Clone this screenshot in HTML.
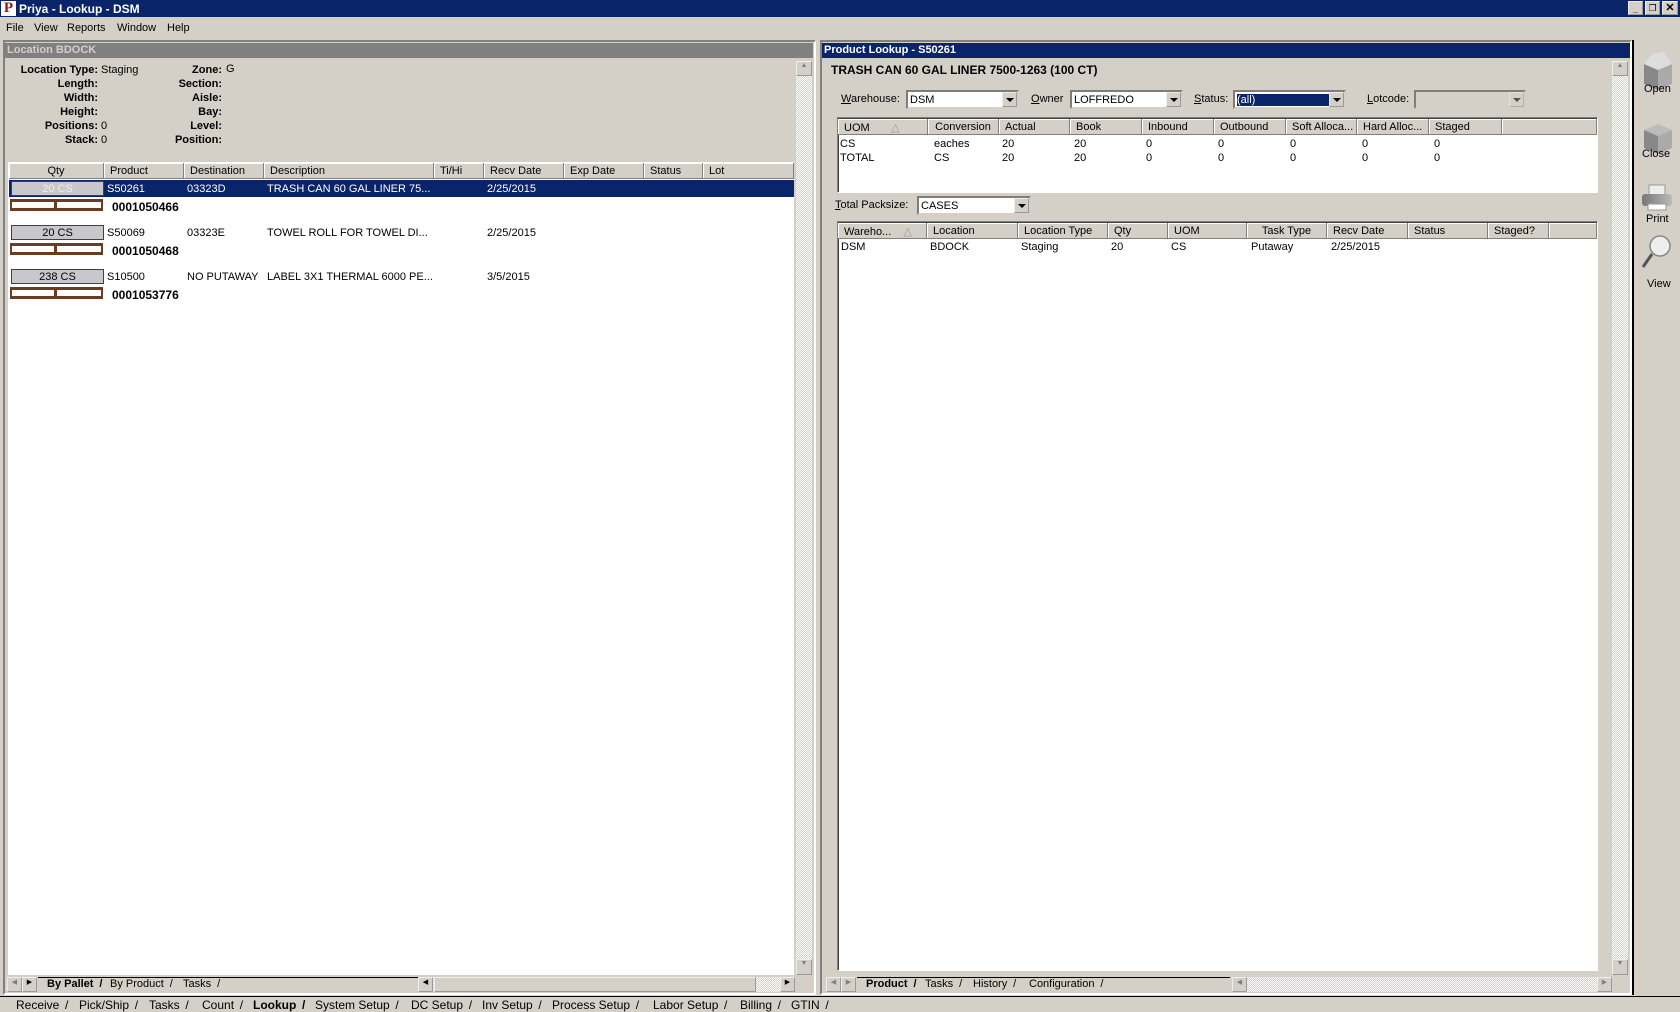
<!DOCTYPE html>
<html><head><meta charset="utf-8"><style>
*{box-sizing:border-box;margin:0;padding:0}
body{width:1680px;height:1012px;background:#d4d0c8;font-family:"Liberation Sans",Tahoma,sans-serif;font-size:11px;color:#000;position:relative;overflow:hidden}
.a{position:absolute;white-space:nowrap}
.b{font-weight:bold}
.sunk{border:1px solid;border-color:#808080 #fff #fff #808080;box-shadow:inset 1px 1px 0 #404040}
.hd{position:absolute;height:16px;background:#d4d0c8;border-right:1px solid #808080;border-bottom:1px solid #808080;box-shadow:inset 1px 1px 0 #fff;padding:2px 6px;white-space:nowrap;overflow:hidden}
.combo{position:absolute;height:19px;background:#fff;border:2px inset #d4d0c8;padding:2px 2px;font-size:11px}
.combo i{position:absolute;right:0;top:0;width:15px;height:15px;background:#d4d0c8;border:1px outset #eee}
.combo i:after{content:"";position:absolute;left:3px;top:5px;border:4px solid transparent;border-top:4px solid #000}
.sb{position:absolute;background:repeating-conic-gradient(#fff 0 25%,#d4d0c8 0 50%) 0 0/2px 2px}
.btn{position:absolute;width:15px;height:15px;background:#d4d0c8;border:1px outset #eee}
.pal{position:absolute;width:93px;height:12px;border:3px solid #6b3d20;border-left-width:2px;border-right-width:2px;background:#fff}
.pal:before{content:"";position:absolute;left:42px;top:0;width:3px;height:6px;background:#6b3d20}
.qty{position:absolute;width:93px;height:15px;background:#c8c8cc;border:1px solid #404040;text-align:center;padding-top:1px}
.tab{position:absolute}
.tab:after{content:"/";position:absolute;right:-9px;color:#000}
</style></head><body>
<!-- title -->
<div class="a" style="left:0;top:0;width:1680px;height:17px;background:#0a246a"></div>
<div class="a" style="left:1px;top:1px;width:15px;height:15px;background:#fff;color:#8b1a1a;font:bold 15px 'Liberation Serif',serif;line-height:15px;text-align:center">P</div>
<div class="a b" style="left:19px;top:2px;color:#fff;font-size:12px">Priya - Lookup - DSM</div>
<div class="btn" style="left:1628px;top:1px;width:15px;height:14px;font-size:9px;text-align:center;font-weight:bold;line-height:14px">_</div>
<div class="btn" style="left:1645px;top:1px;width:15px;height:14px;font-size:9px;text-align:center;line-height:12px">❐</div>
<div class="btn" style="left:1662px;top:1px;width:16px;height:14px;text-align:center;font-weight:bold;line-height:12px">✕</div>
<!-- menu -->
<div class="a" style="left:6px;top:22px">File</div>
<div class="a" style="left:34px;top:22px">View</div>
<div class="a" style="left:67px;top:22px">Reports</div>
<div class="a" style="left:117px;top:22px">Window</div>
<div class="a" style="left:167px;top:22px">Help</div>

<!-- left panel -->
<div class="a" style="left:3px;top:40px;width:813px;height:955px;border:2px solid;border-color:#808080 #fff #fff #808080"></div>
<div class="a b" style="left:5px;top:43px;width:808px;height:15px;background:#808080;color:#d4d0c8;padding:1px 2px">Location BDOCK</div>
<div class="a b" style="left:0;top:63px;width:98px;text-align:right;line-height:14px">Location Type:<br>Length:<br>Width:<br>Height:<br>Positions:<br>Stack:</div>
<div class="a" style="left:101px;top:63px;line-height:14px">Staging<br><br><br><br>0<br>0</div>
<div class="a b" style="left:150px;top:63px;width:72px;text-align:right;line-height:14px">Zone:<br>Section:<br>Aisle:<br>Bay:<br>Level:<br>Position:</div>
<div class="a" style="left:226px;top:63px">G</div>
<div class="a" style="left:8px;top:162px;width:786px;height:813px;background:#fff" ></div>
<div class="hd" style="left:9px;top:163px;width:95px;text-align:center">Qty</div>
<div class="hd" style="left:104px;top:163px;width:80px">Product</div>
<div class="hd" style="left:184px;top:163px;width:80px">Destination</div>
<div class="hd" style="left:264px;top:163px;width:170px">Description</div>
<div class="hd" style="left:434px;top:163px;width:50px">Ti/Hi</div>
<div class="hd" style="left:484px;top:163px;width:80px">Recv Date</div>
<div class="hd" style="left:564px;top:163px;width:80px">Exp Date</div>
<div class="hd" style="left:644px;top:163px;width:59px">Status</div>
<div class="hd" style="left:703px;top:163px;width:91px">Lot</div>
<div class="a" style="left:9px;top:180px;width:785px;height:17px;background:#0a246a"></div>
<div class="qty" style="left:11px;top:181px;color:#eee">20 CS</div>
<div class="a" style="left:107px;top:183px;color:#fff">S50261</div><div class="a" style="left:187px;top:183px;color:#fff">03323D</div><div class="a" style="left:267px;top:183px;color:#fff">TRASH CAN 60 GAL LINER 75...</div><div class="a" style="left:487px;top:183px;color:#fff">2/25/2015</div>
<div class="pal" style="left:10px;top:199px"></div><div class="a b" style="left:112px;top:200px;font-size:12px">0001050466</div>
<div class="qty" style="left:11px;top:225px">20 CS</div>
<div class="a" style="left:107px;top:227px">S50069</div><div class="a" style="left:187px;top:227px">03323E</div><div class="a" style="left:267px;top:227px">TOWEL ROLL FOR TOWEL DI...</div><div class="a" style="left:487px;top:227px">2/25/2015</div>
<div class="pal" style="left:10px;top:243px"></div><div class="a b" style="left:112px;top:244px;font-size:12px">0001050468</div>
<div class="qty" style="left:11px;top:269px">238 CS</div>
<div class="a" style="left:107px;top:271px">S10500</div><div class="a" style="left:187px;top:271px">NO PUTAWAY</div><div class="a" style="left:267px;top:271px">LABEL 3X1 THERMAL 6000 PE...</div><div class="a" style="left:487px;top:271px">3/5/2015</div>
<div class="pal" style="left:10px;top:287px"></div><div class="a b" style="left:112px;top:288px;font-size:12px">0001053776</div>
<div class="sb" style="left:796px;top:61px;width:16px;height:914px"></div>
<div class="btn" style="left:796px;top:61px;width:16px;height:15px;font-size:7px;text-align:center;color:#808080">▲</div>
<div class="btn" style="left:796px;top:959px;width:16px;height:16px;font-size:7px;text-align:center;color:#808080">▼</div>
<div class="btn" style="left:7px;top:977px;font-size:7px;text-align:center;color:#808080">◀</div>
<div class="btn" style="left:22px;top:977px;font-size:7px;text-align:center">▶</div>
<div class="a" style="left:38px;top:977px;width:380px;height:15px;border-top:1px solid #000"></div>
<div class="tab b" style="left:47px;top:978px">By Pallet</div>
<div class="tab" style="left:110px;top:978px">By Product</div>
<div class="tab" style="left:183px;top:978px">Tasks</div>
<div class="sb" style="left:418px;top:977px;width:377px;height:15px"></div>
<div class="btn" style="left:418px;top:977px;font-size:7px;text-align:center">◀</div>
<div class="a" style="left:434px;top:977px;width:322px;height:15px;background:#d4d0c8;border:1px outset #eee"></div>
<div class="btn" style="left:780px;top:977px;font-size:7px;text-align:center">▶</div>

<!-- right panel -->
<div class="a" style="left:820px;top:40px;width:812px;height:955px;border:2px solid;border-color:#808080 #fff #fff #808080"></div>
<div class="a b" style="left:822px;top:43px;width:808px;height:15px;background:#0a246a;color:#fff;padding:1px 2px">Product Lookup - S50261</div>
<div class="a b" style="left:831px;top:63px;font-size:12px">TRASH CAN 60 GAL LINER 7500-1263 (100 CT)</div>
<div class="a" style="left:841px;top:93px"><u>W</u>arehouse:</div>
<div class="combo" style="left:906px;top:90px;width:113px">DSM<i></i></div>
<div class="a" style="left:1031px;top:93px"><u>O</u>wner</div>
<div class="combo" style="left:1070px;top:90px;width:113px">LOFFREDO<i></i></div>
<div class="a" style="left:1194px;top:93px"><u>S</u>tatus:</div>
<div class="combo" style="left:1233px;top:90px;width:113px"><span style="background:#0a246a;color:#fff;display:inline-block;width:92px;outline:1px dotted #fff">(all)</span><i></i></div>
<div class="a" style="left:1367px;top:93px"><u>L</u>otcode:</div>
<div class="combo" style="left:1414px;top:90px;width:112px;background:#d4d0c8"><i style="opacity:.6"></i></div>
<div class="a sunk" style="left:837px;top:117px;width:761px;height:76px;background:#fff"></div>
<div class="hd" style="left:838px;top:119px;width:90px">UOM &nbsp; &nbsp; &nbsp; <span style="color:#999">△</span></div>
<div class="hd" style="left:928px;top:119px;width:71px;text-align:center">Conversion</div>
<div class="hd" style="left:999px;top:119px;width:71px">Actual</div>
<div class="hd" style="left:1070px;top:119px;width:72px">Book</div>
<div class="hd" style="left:1142px;top:119px;width:72px">Inbound</div>
<div class="hd" style="left:1214px;top:119px;width:72px">Outbound</div>
<div class="hd" style="left:1286px;top:119px;width:71px">Soft Alloca...</div>
<div class="hd" style="left:1357px;top:119px;width:72px">Hard Alloc...</div>
<div class="hd" style="left:1429px;top:119px;width:73px">Staged</div>
<div class="hd" style="left:1502px;top:119px;width:95px"></div>
<div class="a" style="left:840px;top:137px;line-height:14px">CS<br>TOTAL</div>
<div class="a" style="left:934px;top:137px;line-height:14px">eaches<br>CS</div>
<div class="a" style="left:1002px;top:137px;line-height:14px">20<br>20</div>
<div class="a" style="left:1074px;top:137px;line-height:14px">20<br>20</div>
<div class="a" style="left:1146px;top:137px;line-height:14px">0<br>0</div>
<div class="a" style="left:1218px;top:137px;line-height:14px">0<br>0</div>
<div class="a" style="left:1290px;top:137px;line-height:14px">0<br>0</div>
<div class="a" style="left:1362px;top:137px;line-height:14px">0<br>0</div>
<div class="a" style="left:1434px;top:137px;line-height:14px">0<br>0</div>
<div class="a" style="left:835px;top:199px"><u>T</u>otal Packsize:</div>
<div class="combo" style="left:917px;top:196px;width:114px">CASES<i></i></div>
<div class="a sunk" style="left:837px;top:221px;width:761px;height:750px;background:#fff"></div>
<div class="hd" style="left:838px;top:223px;width:89px">Wareho... &nbsp; &nbsp;<span style="color:#999">△</span></div>
<div class="hd" style="left:927px;top:223px;width:91px">Location</div>
<div class="hd" style="left:1018px;top:223px;width:90px">Location Type</div>
<div class="hd" style="left:1108px;top:223px;width:60px">Qty</div>
<div class="hd" style="left:1168px;top:223px;width:79px">UOM</div>
<div class="hd" style="left:1247px;top:223px;width:80px;text-align:center">Task Type</div>
<div class="hd" style="left:1327px;top:223px;width:81px">Recv Date</div>
<div class="hd" style="left:1408px;top:223px;width:80px">Status</div>
<div class="hd" style="left:1488px;top:223px;width:61px">Staged?</div>
<div class="hd" style="left:1549px;top:223px;width:48px"></div>
<div class="a" style="left:841px;top:241px">DSM</div><div class="a" style="left:930px;top:241px">BDOCK</div><div class="a" style="left:1021px;top:241px">Staging</div><div class="a" style="left:1111px;top:241px">20</div><div class="a" style="left:1171px;top:241px">CS</div><div class="a" style="left:1251px;top:241px">Putaway</div><div class="a" style="left:1331px;top:241px">2/25/2015</div>
<div class="sb" style="left:1612px;top:61px;width:16px;height:914px"></div>
<div class="btn" style="left:1612px;top:61px;width:16px;font-size:7px;text-align:center;color:#808080">▲</div>
<div class="btn" style="left:1612px;top:959px;width:16px;height:16px;font-size:7px;text-align:center;color:#808080">▼</div>
<div class="btn" style="left:826px;top:977px;font-size:7px;text-align:center;color:#808080">◀</div>
<div class="btn" style="left:841px;top:977px;font-size:7px;text-align:center;color:#808080">▶</div>
<div class="a" style="left:857px;top:977px;width:373px;height:15px;border-top:1px solid #000"></div>
<div class="tab b" style="left:866px;top:978px">Product</div>
<div class="tab" style="left:925px;top:978px">Tasks</div>
<div class="tab" style="left:973px;top:978px">History</div>
<div class="tab" style="left:1029px;top:978px">Configuration</div>
<div class="sb" style="left:1232px;top:977px;width:380px;height:15px"></div>
<div class="btn" style="left:1232px;top:977px;font-size:7px;text-align:center;color:#808080">◀</div>
<div class="btn" style="left:1597px;top:977px;font-size:7px;text-align:center;color:#808080">▶</div>

<!-- toolbar -->
<div class="a" style="left:1632px;top:40px;width:2px;height:955px;background:#000"></div>
<svg class="a" style="left:1638px;top:50px" width="38" height="250" viewBox="0 0 38 250">
<defs><linearGradient id="g" x1="0" x2="1"><stop offset="0" stop-color="#777"/><stop offset="1" stop-color="#bbb"/></linearGradient></defs>
<polygon points="6,14 20,20 20,40 6,34" fill="#888"/><polygon points="20,20 34,14 34,34 20,40" fill="#aaa"/><polygon points="6,14 14,4 26,2 34,14 20,20" fill="#ddd"/>
<polygon points="6,80 20,86 20,104 6,98" fill="#888"/><polygon points="20,86 34,80 34,98 20,104" fill="#aaa"/><polygon points="6,80 20,74 34,80 20,86" fill="#bbb"/>
<rect x="11" y="135" width="16" height="10" fill="#eee" stroke="#999"/><rect x="4" y="144" width="30" height="12" rx="3" fill="url(#g)"/><rect x="10" y="154" width="18" height="6" fill="#fff" stroke="#999"/>
<circle cx="22" cy="196" r="10" fill="#eee" stroke="#888" stroke-width="1.5"/><line x1="14" y1="204" x2="5" y2="217" stroke="#555" stroke-width="3"/>
</svg>
<div class="a" style="left:1644px;top:83px">Open</div>
<div class="a" style="left:1642px;top:148px">Close</div>
<div class="a" style="left:1646px;top:213px">Print</div>
<div class="a" style="left:1647px;top:278px">View</div>

<!-- bottom tabs -->
<div class="a" style="left:0;top:996px;width:1680px;height:16px;border-top:1px solid #000"></div>
<div class="a" style="left:6px;top:998px;font-size:12px;word-spacing:0">
<span class="tab" style="left:10px">Receive</span><span class="tab" style="left:73px">Pick/Ship</span><span class="tab" style="left:143px">Tasks</span><span class="tab" style="left:196px">Count</span><span class="tab b" style="left:247px">Lookup</span><span class="tab" style="left:309px">System Setup</span><span class="tab" style="left:405px">DC Setup</span><span class="tab" style="left:476px">Inv Setup</span><span class="tab" style="left:546px">Process Setup</span><span class="tab" style="left:647px">Labor Setup</span><span class="tab" style="left:734px">Billing</span><span class="tab" style="left:785px">GTIN</span>
</div>
</body></html>
